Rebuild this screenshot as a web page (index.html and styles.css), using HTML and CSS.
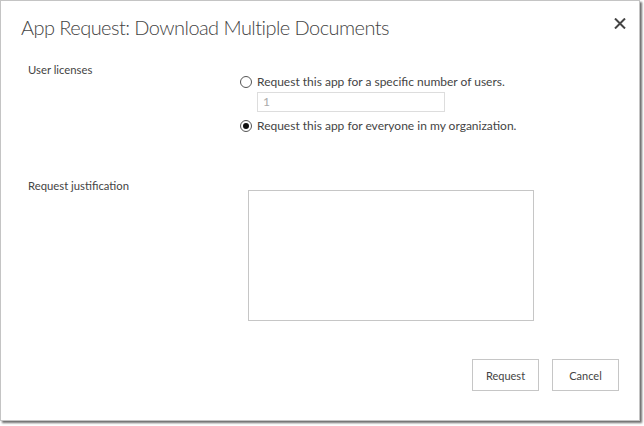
FILE: index.html
```html
<!DOCTYPE html>
<html>
<head>
<meta charset="utf-8">
<link rel="stylesheet" href="styles.css">
</head>
<body>
<div class="dialog">
  <div class="title-row">
    <h1 class="title">App Request: Download Multiple Documents</h1>
    <span class="close" aria-label="Close">
      <svg width="12" height="11" viewBox="0 0 12 11"><path d="M1 0.5 L11 10.5 M11 0.5 L1 10.5" stroke="#444" stroke-width="2" fill="none"/></svg>
    </span>
  </div>
  <div class="row licenses">
    <div class="label">User licenses</div>
    <div class="field">
      <label class="radio"><span class="dot"></span><span>Request this app for a specific number of users.</span></label>
      <div class="num">1</div>
      <label class="radio"><span class="dot checked"></span><span>Request this app for everyone in my organization.</span></label>
    </div>
  </div>
  <div class="row justification">
    <div class="label">Request justification</div>
    <div class="field"><div class="textarea"></div></div>
  </div>
  <div class="buttons">
    <button class="btn">Request</button>
    <button class="btn">Cancel</button>
  </div>
</div>
</body>
</html>
```
FILE: styles.css
```css
html, body { margin: 0; padding: 0; background: #fff; }
body { width: 644px; height: 426px; overflow: hidden; font-family: "Lato", "Open Sans", sans-serif; color: #444; }
.dialog {
  box-sizing: border-box;
  width: 640px; height: 421px;
  border: 1px solid #c4c4c4;
  box-shadow: 2px 2px 2px #6e6e6e;
  background: #fff;
  display: flex; flex-direction: column;
}
.title-row { display: flex; justify-content: space-between; align-items: flex-start; padding: 12px 13px 0 20px; }
.title { margin: 0; font-weight: 300; font-size: 20px; letter-spacing: -0.55px; line-height: 28px; color: #444; }
.close { padding-top: 5px; line-height: 0; }
.row { display: grid; grid-template-columns: 212px 1fr; padding-left: 27px; }
.label { font-size: 11.3px; line-height: 16px; color: #444; }
.licenses { margin-top: 21px; }
.licenses .field { padding-top: 12px; }
.radio { display: flex; align-items: center; font-size: 12px; line-height: 16px; color: #444; }
.dot { width: 10px; height: 10px; border: 1px solid #555; border-radius: 50%; margin-right: 5px; box-sizing: content-box; position: relative; }
.dot.checked::after { content: ""; position: absolute; left: 2px; top: 2px; width: 6px; height: 6px; border-radius: 50%; background: #111; }
.num { box-sizing: border-box; width: 188px; height: 20px; margin: 2px 0 6px 17px; border: 1px solid #ddd; font-size: 12px; line-height: 18px; padding-left: 5px; color: #aaa; }
.justification { margin-top: 44px; }
.justification .field { padding-top: 12px; padding-left: 8px; }
.textarea { box-sizing: border-box; width: 286px; height: 131px; border: 1px solid #c6c6c6; }
.buttons { display: flex; justify-content: flex-end; gap: 13px; padding-right: 20px; margin-top: 38px; }
.btn { box-sizing: border-box; height: 32px; min-width: 67px; padding: 0 10px; background: #fff; border: 1px solid #c6c6c6; font-family: inherit; font-size: 11px; color: #444; }
```
